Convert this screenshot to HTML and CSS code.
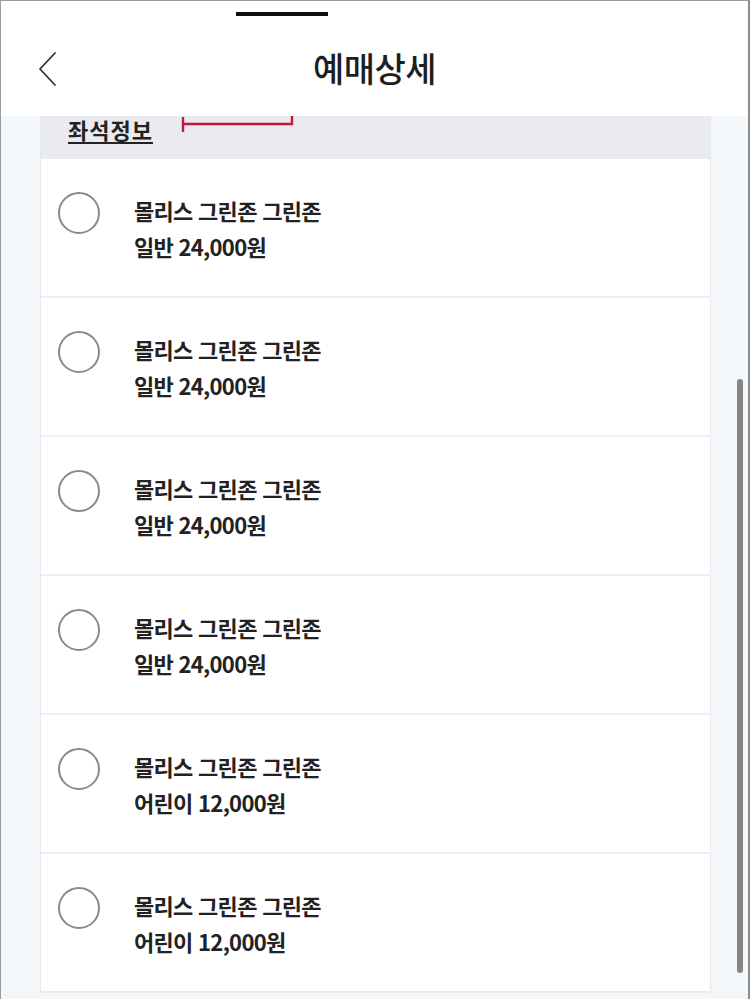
FILE: index.html
```html
<!DOCTYPE html>
<html lang="ko">
<head>
<meta charset="utf-8">
<title>예매상세</title>
<link rel="stylesheet" href="styles.css">
</head>
<body>
<div class="screen">
  <header class="header">
    <div class="handle"></div>
    <div class="nav">
      <svg class="back" width="22" height="36" viewBox="0 0 22 36" aria-hidden="true">
        <path d="M18 2 L3 18 L18 34" fill="none" stroke="#333" stroke-width="1.8" stroke-linecap="round" stroke-linejoin="round"/>
      </svg>
      <h1 class="title">예매상세</h1>
    </div>
  </header>
  <main class="content">
    <div class="card">
      <div class="section-head"><span class="section-title">좌석정보</span></div>
      <ul class="seats">
        <li class="seat"><span class="radio"></span><div class="info"><div class="line">몰리스 그린존 그린존</div><div class="line">일반 24,000원</div></div></li>
        <li class="seat"><span class="radio"></span><div class="info"><div class="line">몰리스 그린존 그린존</div><div class="line">일반 24,000원</div></div></li>
        <li class="seat"><span class="radio"></span><div class="info"><div class="line">몰리스 그린존 그린존</div><div class="line">일반 24,000원</div></div></li>
        <li class="seat"><span class="radio"></span><div class="info"><div class="line">몰리스 그린존 그린존</div><div class="line">일반 24,000원</div></div></li>
        <li class="seat"><span class="radio"></span><div class="info"><div class="line">몰리스 그린존 그린존</div><div class="line">어린이 12,000원</div></div></li>
        <li class="seat"><span class="radio"></span><div class="info"><div class="line">몰리스 그린존 그린존</div><div class="line">어린이 12,000원</div></div></li>
      </ul>
    </div>
  </main>
  <svg class="bracket" width="116" height="20" viewBox="0 0 116 20" aria-hidden="true">
    <path d="M3 2 L3 17 M3 9 L112 9 L112 1" fill="none" stroke="#c4173a" stroke-width="2.4"/>
  </svg>
  <div class="scrollbar"></div>
</div>
</body>
</html>
```
FILE: styles.css
```css
* { box-sizing: border-box; }
html, body { margin: 0; padding: 0; }
body {
  font-family: "Noto Sans CJK KR", "Noto Sans", sans-serif;
  color: #222;
  background: #f4f7f9;
}
.screen {
  position: relative;
  width: 750px;
  height: 999px;
  overflow: hidden;
  border-top: 1px solid #9c9c9c;
  border-left: 1px solid #9c9c9c;
  border-right: 2px solid #8c8c8c;
  background: #f4f7f9;
}
.header {
  height: 115px;
  background: #fff;
  display: flex;
  flex-direction: column;
  align-items: flex-start;
}
.handle {
  width: 92px;
  height: 4px;
  background: #111;
  margin: 11px 0 0 235px;
}
.nav {
  position: relative;
  width: 100%;
  display: flex;
  align-items: center;
  justify-content: center;
  height: 64px;
  margin-top: 20px;
}
.back {
  position: absolute;
  left: 36px;
  top: 15px;
}
.title {
  margin: 0;
  font-size: 34px;
  font-weight: 500;
  letter-spacing: -0.5px;
  line-height: 64px;
  color: #1e1e1e;
}
.content {
  padding: 0 37px 0 39px;
}
.card {
  background: #fff;
  border-left: 1px solid #e6e8ec;
  border-right: 1px solid #e6e8ec;
  border-bottom: 2px solid #e8eaee;
  border-radius: 0 0 3px 3px;
}
.section-head {
  height: 43px;
  background: #e9ebf0;
  padding: 0 0 0 27px;
  display: flex;
  align-items: flex-start;
}
.section-title {
  margin-top: -2px;
  font-size: 22px;
  font-weight: 700;
  letter-spacing: 1px;
  text-decoration: underline;
  text-decoration-thickness: 2px;
  text-underline-offset: 3px;
  color: #222;
  line-height: 30px;
}
.seats {
  list-style: none;
  margin: 0;
  padding: 0;
}
.seat {
  height: 139px;
  display: flex;
  align-items: flex-start;
  padding: 33px 0 0 17px;
  border-bottom: 2px solid #eeeff2;
}
.seat:last-child { border-bottom: none; height: 137px; }
.radio {
  width: 42px;
  height: 42px;
  border: 2px solid #878b91;
  border-radius: 50%;
  flex: none;
}
.info {
  margin-left: 34px;
}
.line {
  font-size: 22px;
  font-weight: 700;
  letter-spacing: -0.7px;
  line-height: 36px;
  color: #222;
  white-space: nowrap;
}
.bracket {
  position: absolute;
  left: 179px;
  top: 114px;
}
.scrollbar {
  position: absolute;
  left: 736px;
  top: 378px;
  width: 6px;
  height: 594px;
  border-radius: 3px;
  background: #858585;
}
```
